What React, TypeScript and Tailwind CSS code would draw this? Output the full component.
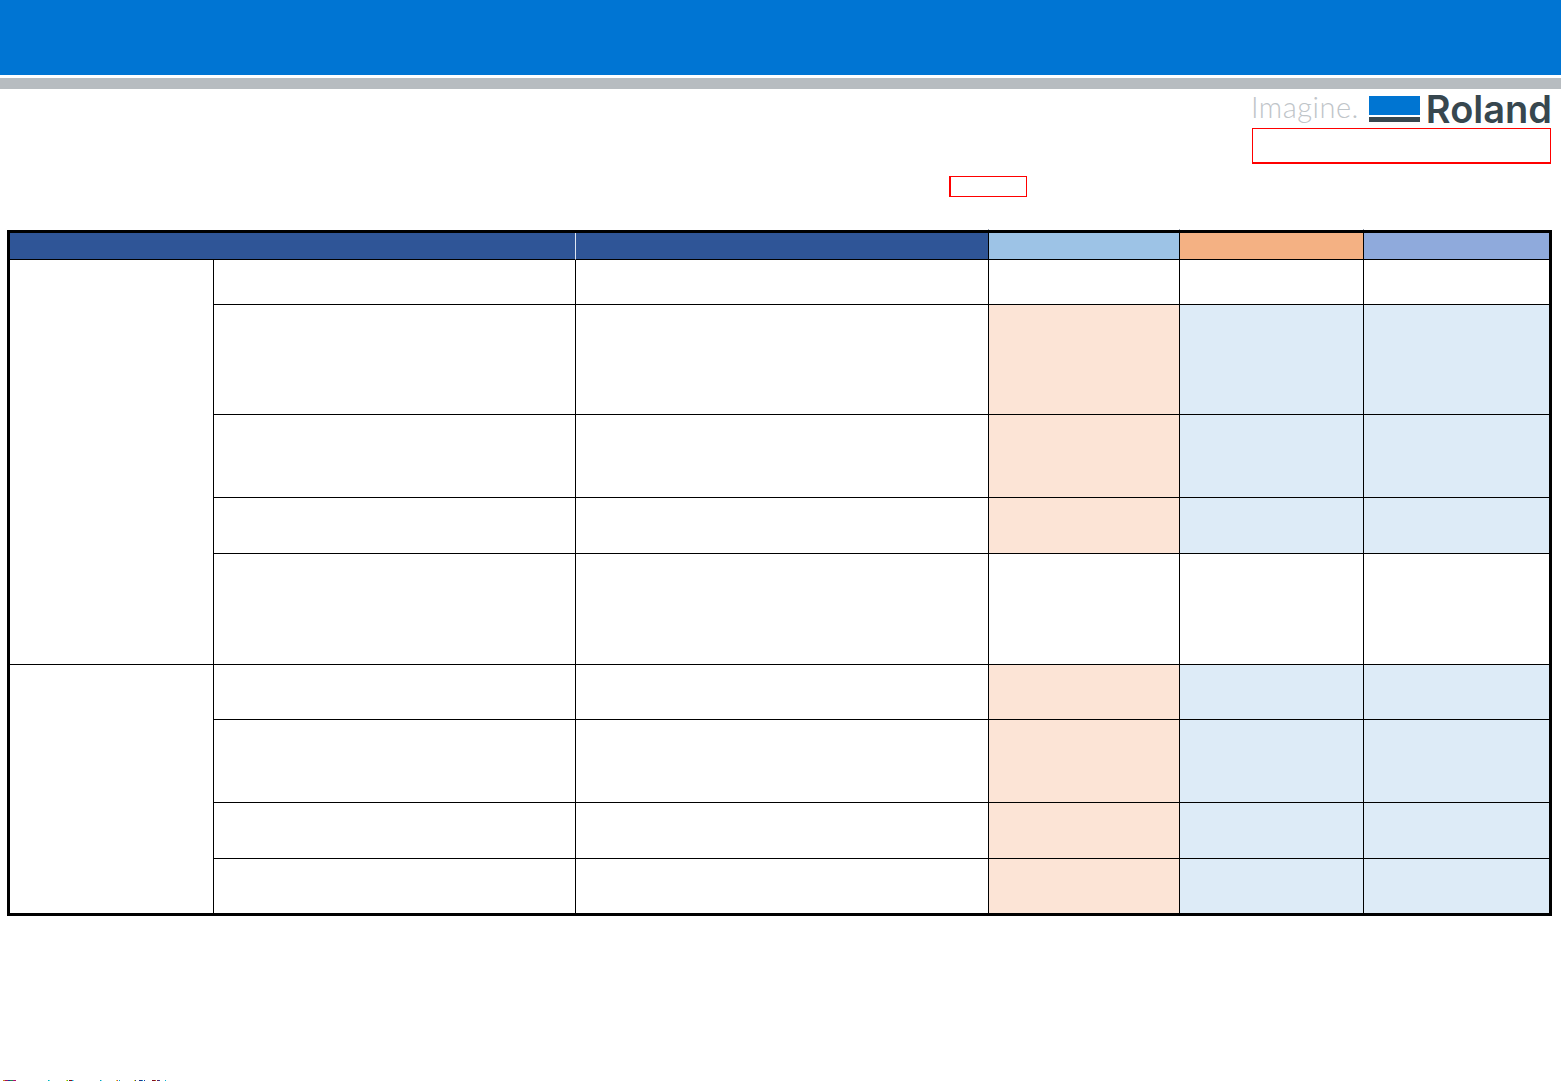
const peach = "bg-[#fce4d6]"
const pale = "bg-[#ddebf7]"

// one entry per body row: fill of the three right-hand columns
const rows = [
  { tint: false, row: "row-start-2" },
  { tint: true, row: "row-start-3" },
  { tint: true, row: "row-start-4" },
  { tint: true, row: "row-start-5" },
  { tint: false, row: "row-start-6" },
  { tint: true, row: "row-start-7" },
  { tint: true, row: "row-start-8" },
  { tint: true, row: "row-start-9" },
  { tint: true, row: "row-start-10", last: true },
]

function Tick() {
  return <span className="absolute -top-[4px] -right-[1px] h-px w-px bg-gray-400" />
}

function RolandLogo() {
  return (
    <div className="flex items-start justify-end pr-[9px] h-[39px] pt-[7px] overflow-visible">
      <span className="mr-[10px] -mt-[7px] font-['Lato',sans-serif] font-light text-[29px] leading-[36px] tracking-[0.5px] text-[#bfc5c9]">
        Imagine.
      </span>
      <div className="flex flex-col w-[51px] mr-[6px]">
        <div className="h-[19px] bg-[#0075d2]" />
        <div className="h-[5px] mt-[2px] bg-[#37474f]" />
      </div>
      <span className="-mt-[2px] font-['Inter',sans-serif] font-semibold text-[38px] leading-[30px] text-[#37474f]">
        Roland
      </span>
    </div>
  )
}

function Specks() {
  const marks: [number, number, string][] = [
    [3, 2, "#d08020"], [5, 3, "#a01060"], [8, 2, "#104090"], [10, 3, "#208050"], [13, 3, "#b01070"],
    [48, 1, "#00b0c0"], [49, 1, "#60e0e0"],
    [66, 1, "#f0e020"], [67, 1, "#40c040"], [69, 3, "#801020"], [72, 1, "#00a0e0"], [73, 1, "#80e0f0"],
    [100, 1, "#00a0c0"], [101, 1, "#80e0f0"],
    [116, 1, "#f0e020"], [117, 1, "#c04080"], [119, 1, "#00b0d0"],
    [134, 1, "#f0e020"], [135, 1, "#304090"], [139, 3, "#203080"], [142, 1, "#00a0e0"], [144, 1, "#2040a0"],
    [152, 3, "#801020"], [155, 1, "#c06010"], [157, 2, "#602060"], [159, 1, "#2050a0"], [165, 1, "#00b0d0"],
  ]
  return (
    <svg width="200" height="1" className="block mt-auto">
      {marks.map(([x, w, c]) => (
        <rect key={x} x={x} y={0} width={w} height={1} fill={c} />
      ))}
    </svg>
  )
}

export default function App() {
  return (
    <div className="flex flex-col h-[1081px] w-[1561px] overflow-hidden bg-white">
      <div className="h-[75px] shrink-0 bg-[#0075d3]" />
      <div className="h-[11px] shrink-0 mt-[3px] bg-[#b7bcc0]" />

      <RolandLogo />

      {/* empty callouts */}
      <div className="flex justify-end pr-[10px]">
        <div className="relative w-[299px] h-[36px] border border-b-2 border-[#ff0000]" />
      </div>
      <div className="ml-[949px] mt-[12px] w-[78px] h-[21px] border border-l-2 border-[#ff0000]" />

      <div className="ml-[7px] mt-[33px] w-[1545px] border-[3px] border-black">
        <div className="grid grid-cols-[204px_362px_413px_191px_184px_185px] grid-rows-[27px_45px_110px_83px_56px_111px_55px_83px_56px_54px]">
          {/* Header */}
          <div className="col-span-2 bg-[#2f5597] border-b border-b-black border-r border-r-[#dfe6f2]" />
          <div className="relative bg-[#2f5597] border-b border-r border-black"><Tick /></div>
          <div className="relative bg-[#9dc3e6] border-b border-r border-black"><Tick /></div>
          <div className="relative bg-[#f4b183] border-b border-r border-black"><Tick /></div>
          <div className="bg-[#8faadc] border-b border-black" />

          {/* Groups */}
          <div className="col-start-1 row-start-2 row-span-5 border-r border-b border-black" />
          <div className="col-start-1 row-start-7 row-span-4 border-r border-black" />

          {rows.map((r) => (
            <div key={r.row} className="contents">
              <div className={`col-start-2 ${r.row} border-r border-black ${r.last ? "" : "border-b"}`} />
              <div className={`col-start-3 ${r.row} border-r border-black ${r.last ? "" : "border-b"}`} />
              <div className={`col-start-4 ${r.row} border-r border-black ${r.last ? "" : "border-b"} ${r.tint ? peach : ""}`} />
              <div className={`col-start-5 ${r.row} border-r border-black ${r.last ? "" : "border-b"} ${r.tint ? pale : ""}`} />
              <div className={`col-start-6 ${r.row} border-black ${r.last ? "" : "border-b"} ${r.tint ? pale : ""}`} />
            </div>
          ))}
        </div>
      </div>

      <Specks />
    </div>
  )
}
